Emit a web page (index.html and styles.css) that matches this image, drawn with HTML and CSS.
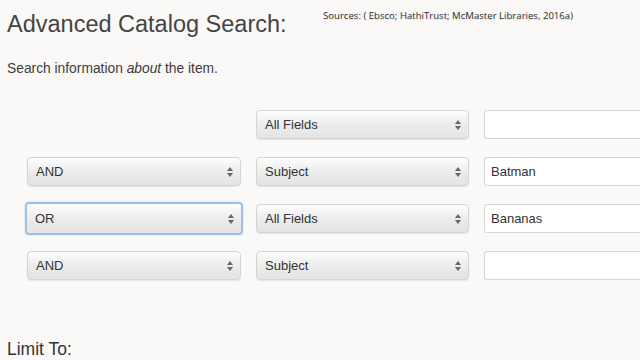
FILE: index.html
```html
<!DOCTYPE html>
<html>
<head>
	<title>Advanced Catalog Search</title>
	<link rel="stylesheet" href="styles.css">
</head>
<body>
<div class="page">
	<h1 class="title">Advanced Catalog Search:</h1>
	<p class="sources">Sources: ( Ebsco; HathiTrust; McMaster Libraries, 2016a)</p>
	<p class="intro">Search information <em>about</em> the item.</p>

	<div class="rows">
		<div class="cell"></div>
		<div class="select"><span>All Fields</span><svg class="arr" viewBox="0 0 6 10"><path d="M3 0L6 4H0z M3 10L6 6H0z"/></svg></div>
		<div class="input"></div>

		<div class="select"><span>AND</span><svg class="arr" viewBox="0 0 6 10"><path d="M3 0L6 4H0z M3 10L6 6H0z"/></svg></div>
		<div class="select"><span>Subject</span><svg class="arr" viewBox="0 0 6 10"><path d="M3 0L6 4H0z M3 10L6 6H0z"/></svg></div>
		<div class="input">Batman</div>

		<div class="select focus"><span>OR</span><svg class="arr" viewBox="0 0 6 10"><path d="M3 0L6 4H0z M3 10L6 6H0z"/></svg></div>
		<div class="select"><span>All Fields</span><svg class="arr" viewBox="0 0 6 10"><path d="M3 0L6 4H0z M3 10L6 6H0z"/></svg></div>
		<div class="input">Bananas</div>

		<div class="select"><span>AND</span><svg class="arr" viewBox="0 0 6 10"><path d="M3 0L6 4H0z M3 10L6 6H0z"/></svg></div>
		<div class="select"><span>Subject</span><svg class="arr" viewBox="0 0 6 10"><path d="M3 0L6 4H0z M3 10L6 6H0z"/></svg></div>
		<div class="input"></div>
	</div>

	<h2 class="limit">Limit To:</h2>
</div>
</body>
</html>
```

FILE: styles.css
```css
* {
	margin: 0;
	padding: 0;
	box-sizing: border-box;
}
html, body {
	width: 640px;
	height: 360px;
	overflow: hidden;
	background: #faf9f7;
}
body {
	font-family: "Liberation Sans", Arial, sans-serif;
	color: #3a3a3a;
}
.page {
	position: relative;
	width: 640px;
	height: 360px;
	overflow: hidden;
	padding: 10px 0 0 7px;
}
.title {
	font-size: 23.5px;
	font-weight: normal;
	color: #444;
	line-height: 28px;
}
.sources {
	position: absolute;
	top: 9px;
	left: 323px;
	font-family: "Open Sans", sans-serif;
	font-size: 9.6px;
	color: #333;
	text-shadow: 0 1px 1px rgba(0,0,0,0.12);
}
.intro {
	margin-top: 22px;
	font-size: 13.8px;
	line-height: 18px;
	color: #3c3c3c;
}
.rows {
	display: grid;
	grid-template-columns: 214px 213px 1fr;
	grid-auto-rows: 29px;
	column-gap: 15px;
	row-gap: 18px;
	margin: 32px 0 0 20px;
}
.select {
	display: flex;
	align-items: center;
	justify-content: space-between;
	padding: 0 7px 0 8px;
	border: 1px solid #d4d4d4;
	border-radius: 4px;
	background: linear-gradient(#fdfdfd, #ebebeb 55%, #e4e4e4);
	box-shadow: 0 1px 1px rgba(0,0,0,0.08);
	font-size: 13px;
	color: #333;
}
.select.focus {
	margin: -2px;
	border: 2px solid #9fc0e4;
	box-shadow: 0 0 2px #b9d3ee;
}
.arr {
	width: 6px;
	height: 10px;
	fill: #666;
}
.input {
	display: flex;
	align-items: center;
	padding-left: 6px;
	border: 1px solid #d6d6d6;
	border-right: none;
	border-radius: 3px 0 0 3px;
	background: #fff;
	font-size: 13px;
	color: #333;
}
.limit {
	margin-top: 58px;
	font-size: 17.5px;
	font-weight: normal;
	color: #333;
	line-height: 22px;
}
```
